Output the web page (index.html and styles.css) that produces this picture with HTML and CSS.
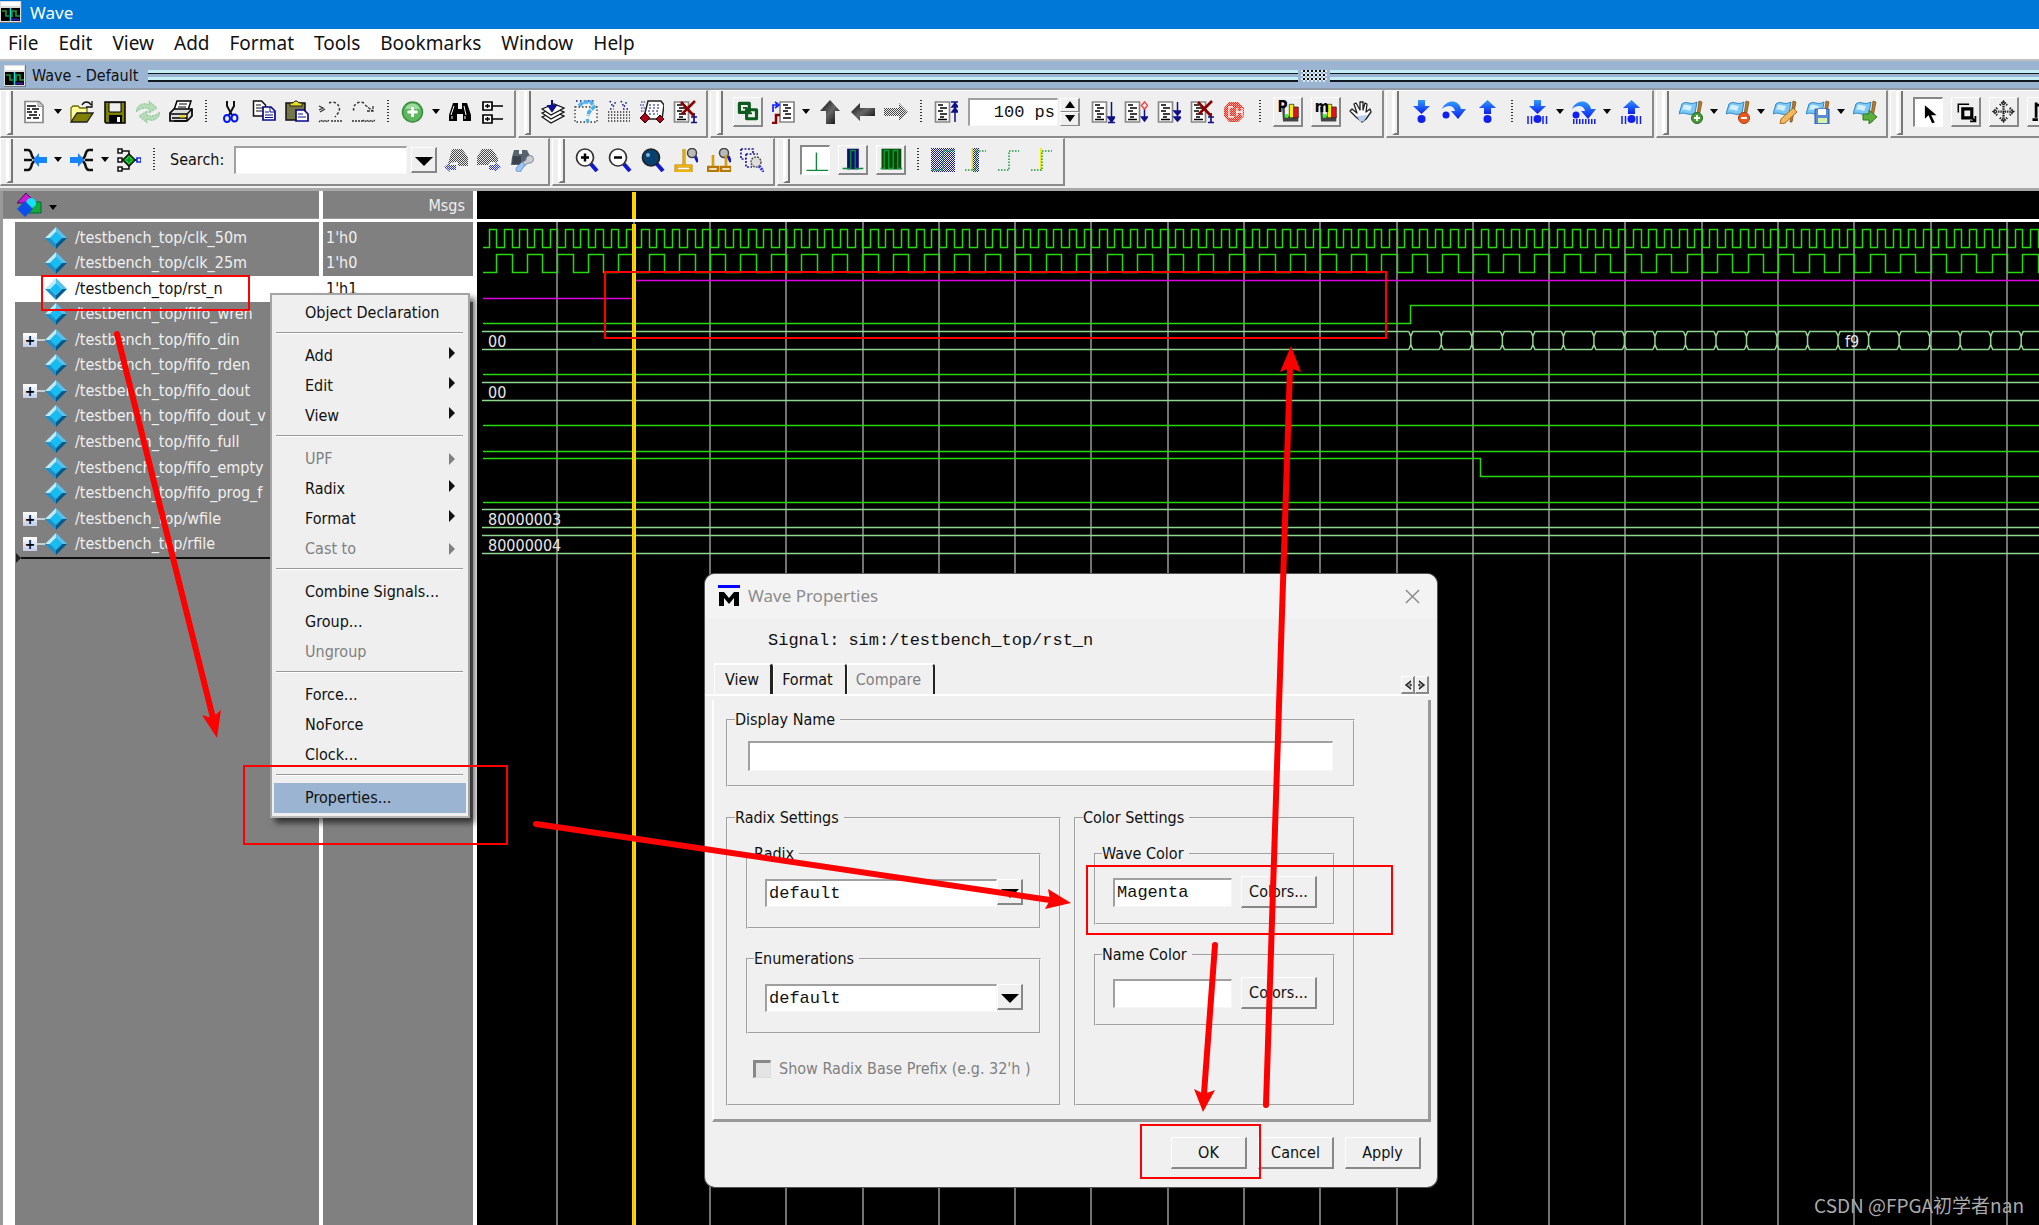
FILE: index.html
```html
<!DOCTYPE html>
<html lang="en">
<head>
<meta charset="utf-8">
<title>Wave</title>
<link rel="stylesheet" href="styles.css">
</head>
<body>
<svg class="sprite" aria-hidden="true">
  <defs>
    <pattern id="p-gray" width="2" height="2" patternUnits="userSpaceOnUse"><path d="M0 0h1v1H0zM1 1h1v1H1z" fill="#444"/></pattern>
    <pattern id="p-blue" width="2" height="2" patternUnits="userSpaceOnUse"><path d="M0 0h1v1H0zM1 1h1v1H1z" fill="#2a2fff"/></pattern>
    <pattern id="p-navy" width="2" height="2" patternUnits="userSpaceOnUse"><path d="M0 0h1v1H0zM1 1h1v1H1z" fill="#1c1c8c"/></pattern>
    <pattern id="p-red" width="2" height="2" patternUnits="userSpaceOnUse"><path d="M0 0h1v1H0zM1 1h1v1H1z" fill="#ff2a18"/></pattern>
    <linearGradient id="g-arrow" x1="0" y1="0" x2="1" y2="1"><stop offset="0" stop-color="#0a0a0a"/><stop offset=".5" stop-color="#666"/><stop offset="1" stop-color="#000"/></linearGradient>
    <linearGradient id="g-blue" x1="0" y1="0" x2="0" y2="1"><stop offset="0" stop-color="#2f9bff"/><stop offset="1" stop-color="#0a1ef0"/></linearGradient>
  </defs>
  <symbol id="i-app" viewBox="0 0 22 22"><path d="M0 0h22v22H0z" fill="#777"/><path d="M0 0h21v21H0z" fill="#ddd"/><path d="M1 1h19v4H1z" fill="#fff"/><path d="M1 7h19v13H1z" fill="#000"/><path d="M2 10h4v5h3M12 16v-6h4v5h4" fill="none" stroke="#1a9a3a" stroke-width="1.6"/><path d="M10.500 7v13" stroke="#18d8d8" stroke-width="1.600"/><path d="M12 18.500h7" stroke="#3a18a0" stroke-width="2"/></symbol>
  <symbol id="i-new" viewBox="0 0 24 24"><path d="M2 1.500h14l4 4v17H2z" fill="#fff" stroke="#888" stroke-width="1.700"/><path d="M15 1.500v5h5" fill="#ccc" stroke="#999"/><path d="M4 6h9M4 9h3m2 0h7M4 12h5m2 0h3M6 15h8m2 0h1M4 18h4m2 0h6" stroke="#000" stroke-width="1.300"/></symbol>
  <symbol id="i-open" viewBox="0 0 24 24"><path d="M1 21V8l2-2h5l2 2h7v5" fill="#ffff9c" stroke="#6b6b00" stroke-width="1.300"/><path d="M1 22l6-9h16l-6 9z" fill="#808000" stroke="#222" stroke-width="1.300"/><path d="M12 5c2-4 7-4 9 0M22 1v6h-6" fill="none" stroke="#111" stroke-width="1.300"/></symbol>
  <symbol id="i-save" viewBox="0 0 24 24"><path d="M2 2h20v21H3l-1-1z" fill="#808000" stroke="#000" stroke-width="1.500"/><path d="M6 2.700h12V12H6z" fill="#eee" stroke="#000"/><path d="M6 15h13v8H6z" fill="#000"/><path d="M14 17h3v5h-3z" fill="#fff"/></symbol>
  <symbol id="i-refresh" viewBox="0 0 24 24"><path d="M0 12c1-8 8-10 13-7V1l8 7-8 5V9c-4-2-8-1-13 3zM24 12c-1 8-8 10-13 7v4l-8-7 8-5v4c4 2 8 1 13-3z" fill="#b4dcb8" stroke="#8cc494" stroke-width="1" stroke-dasharray="2 1"/></symbol>
  <symbol id="i-print" viewBox="0 0 24 24"><path d="M8 1h14l-3 9H5z" fill="#fff" stroke="#000" stroke-width="1.500"/><path d="M10 4h8M9 7h8" stroke="#000"/><path d="M1 13l4-4h18v7l-5 5H1z" fill="#ddd" stroke="#000" stroke-width="1.700"/><path d="M2 14h16l5-5M3 18h15M18 14v7M5 21h12" fill="none" stroke="#000" stroke-width="1.300"/><path d="M11 15.500h5v2h-5z" fill="#e8d800"/></symbol>
  <symbol id="i-cut" viewBox="0 0 24 24"><path d="M8 1v5l5 9M15 1v5l-5 9" fill="none" stroke="#111" stroke-width="2"/><ellipse cx="8" cy="18.500" rx="3" ry="3.500" fill="none" stroke="#0014f0" stroke-width="2"/><ellipse cx="15.500" cy="18" rx="3" ry="3.500" fill="none" stroke="#0014f0" stroke-width="2"/></symbol>
  <symbol id="i-copy" viewBox="0 0 24 24"><path d="M1.500 1h8l4 4v11h-12z" fill="#fff" stroke="#111" stroke-width="1.500"/><path d="M4 5h5M4 8h7M4 11h7" stroke="#111"/><path d="M11 7h8l4 4v9H11z" fill="#fff" stroke="#0a0a8c" stroke-width="1.700"/><path d="M18 7v5h5M13 12h4M13 15h8M13 17.500h8" fill="none" stroke="#0a0a8c"/></symbol>
  <symbol id="i-paste" viewBox="0 0 24 24"><path d="M1 3h19v17H1z" fill="#75754a" stroke="#111" stroke-width="1.500"/><path d="M5 6V3h3l2-2h2l2 2h3v3z" fill="#e8e020" stroke="#222"/><path d="M11 10h8l4 4v7H11z" fill="#fff" stroke="#0a0a8c" stroke-width="1.700"/><path d="M13 14h5M13 17h8" stroke="#0a0a8c"/></symbol>
  <symbol id="i-undo" viewBox="0 0 24 24"><path d="M11 3c7-3 12 3 10 9l-4 5" fill="none" stroke="#333" stroke-width="1.500" stroke-dasharray="2.500 2"/><path d="M1 6l4 2-4 2m1 2l5-3" fill="none" stroke="#333" stroke-width="1.300"/><path d="M1 22l2-2 2 2 2-2 2 2 2-2M13 21h11" fill="none" stroke="#333" stroke-width="1.300" stroke-dasharray="2 1"/></symbol>
  <symbol id="i-redo" viewBox="0 0 24 24"><path d="M13 3C6 0 1 6 3 12" fill="none" stroke="#333" stroke-width="1.500" stroke-dasharray="2.500 2"/><path d="M14 5l8 6m0-5v5h-6" fill="none" stroke="#333" stroke-width="1.300" stroke-dasharray="3 1"/><path d="M1 21h11M12 20l2 2 2-2 2 2 2-2 2 2 2-2" fill="none" stroke="#333" stroke-width="1.300" stroke-dasharray="2 1"/></symbol>
  <symbol id="i-add" viewBox="0 0 24 24"><circle cx="11.500" cy="12" r="10" fill="#5cb85c" stroke="#3d8b45" stroke-width="1.500"/><path d="M4 9a8 8 0 0 1 15 0z" fill="#9bdb9b"/><path d="M11.500 7v10M6.500 12h10" stroke="#fff" stroke-width="3"/></symbol>
  <symbol id="i-find" viewBox="0 0 24 24"><path d="M5 3h5v6h4V3h5l4 12v6h-8v-7H9v7H1v-6z" fill="#000"/><path d="M6 6l-3 9M16 6l2 9M4 19v-3M17 19v-3" stroke="#fff" stroke-width="1"/></symbol>
  <symbol id="i-tree" viewBox="0 0 24 24"><path d="M2 2h9v8H2zM2 15h9v8H2z" fill="#fff" stroke="#000" stroke-width="1.700"/><path d="M4 6h5M6.500 4v4M4 19h5M6.500 17v4M11 6h11M11 19h11" stroke="#000" stroke-width="1.500"/></symbol>
  <symbol id="i-stack" viewBox="0 0 24 24"><g fill="#fff" stroke="#111" stroke-width="1.300"><path d="M1 17l12-5 10 4-13 7z"/><path d="M1 13l12-5 10 4-13 7z"/><path d="M1 9l12-5 10 4-13 7z"/></g><path d="M11 0v8M7.500 6l3.500 5 3.500-5z" stroke="#10108c" stroke-width="2" fill="#10108c"/></symbol>
  <symbol id="i-query" viewBox="0 0 24 24"><path d="M1 7h22v15H1z" fill="#f6f6f6" stroke="#333" stroke-width="1.300" stroke-dasharray="1.500 2"/><path d="M2 1h20" stroke="#10108c" stroke-width="1.300" stroke-dasharray="1.500 2.500"/><path d="M5 6l4-4h8l3 5-5 5-1 4M13 19l1 3" fill="none" stroke="#4db0f0" stroke-width="3.500" stroke-dasharray="5 1"/></symbol>
  <symbol id="i-grid" viewBox="0 0 24 24"><path d="M3 1l3 6 3-6M14 1l3 6 3-6M3 9h4m9 0h5" fill="none" stroke="#10108c" stroke-width="1.500" stroke-dasharray="1.500 2"/><path d="M1 12h22M1 15h22M1 18h22M1 21h22" stroke="#333" stroke-width="1.300" stroke-dasharray="1.300 1.700"/></symbol>
  <symbol id="i-run" viewBox="0 0 24 24"><path d="M8 1h13l3 4-2 14H8L5 13z" fill="#fff" stroke="#222" stroke-width="1.500"/><path d="M9 5h11M9 8h11M8 11h12M9 14h9" stroke="#10108c" stroke-width="1" stroke-dasharray="2 2"/><path d="M1 2h4M0 5h5M1 8h4M1 11h3" stroke="#10108c" stroke-dasharray="1.500 1"/><path d="M5 13l5 5-5 5-5-5zM20 15l4 4-4 4-4-4z" fill="#b00020" stroke="#200"/></symbol>
  <symbol id="i-page" viewBox="0 0 24 24"><path d="M1.500 2h14v20h-14z" fill="#fff" stroke="#888" stroke-width="1.700"/><path d="M4 5h5M6 8h7M4 11h5M6 14h7M6 17h4M4 19.500h9" stroke="#000" stroke-width="1.700"/></symbol>
  <symbol id="i-page-x" viewBox="0 0 24 24"><use href="#i-page" width="24" height="24"/><path d="M21 13v9M18 17h6M18 22.500h6" stroke="#10108c" stroke-width="1.700"/><path d="M8 2l13 14M22 1L9 14" stroke="#8b0000" stroke-width="2.700"/></symbol>
  <symbol id="i-page-up" viewBox="0 0 24 24"><use href="#i-page" width="24" height="24"/><path d="M17 2h7M21 2v20M21 3l-3 4h6zM21 8l-3 4h6z" stroke="#10108c" stroke-width="1.500" fill="#10108c"/></symbol>
  <symbol id="i-page-1" viewBox="0 0 24 24"><use href="#i-page" width="24" height="24"/><path d="M20.500 2v19M17 17l3.500 5 3.500-5zM17 22.500h7" stroke="#10108c" stroke-width="1.500" fill="#10108c"/></symbol>
  <symbol id="i-page-2" viewBox="0 0 24 24"><use href="#i-page" width="24" height="24"/><path d="M20.500 9v12M17.500 17l3 4 3-4z" stroke="#10108c" stroke-width="1.500" fill="#10108c"/><path d="M20.500 2l3 3.500-3 3.500-3-3.500z" fill="#fff" stroke="#ff4040" stroke-width="1.500"/></symbol>
  <symbol id="i-page-3" viewBox="0 0 24 24"><use href="#i-page" width="24" height="24"/><path d="M20.500 2v19M17 11l3.500 4 3.500-4zM17 17l3.500 4 3.500-4z" stroke="#10108c" stroke-width="1.500" fill="#10108c"/></symbol>
  <symbol id="i-link" viewBox="0 0 30 30"><path d="M6 6h11v10H6zM14 13h11v10H14z" fill="none" stroke="#0b5a1e" stroke-width="3.500" stroke-linejoin="round"/><path d="M10 11h4v6h6" fill="none" stroke="#0b5a1e" stroke-width="2"/></symbol>
  <symbol id="i-edge" viewBox="0 0 24 24"><path d="M9 2h14v20H9z" fill="#fff" stroke="#888" stroke-width="1.700"/><path d="M12 5h5M14 8h6M12 11h5M14 14h6M12 18h8" stroke="#000" stroke-width="1.700"/><path d="M2 12V5h4M4 2l4 3-4 3" fill="none" stroke="#1020ff" stroke-width="1.700"/><path d="M1 23h4v-8h4" fill="none" stroke="#8b0000" stroke-width="2.500"/></symbol>
  <symbol id="i-up" viewBox="0 0 24 24"><path d="M12 0l10 11h-5v13H8V11H2z" fill="url(#g-arrow)"/></symbol>
  <symbol id="i-left" viewBox="0 0 24 24"><path d="M0 12L9 3v5h15v8H9v5z" fill="url(#g-arrow)"/></symbol>
  <symbol id="i-right" viewBox="0 0 24 24"><path d="M24 12l-9-9v5H0v8h15v5z" fill="url(#p-gray)"/></symbol>
  <symbol id="i-stop" viewBox="0 0 24 24"><path d="M6 2h9l6 6v8l-6 6H6l-5-6V8z" fill="url(#p-red)"/><path d="M6 2h9l6 6v8l-6 6H6l-5-6V8z" fill="#ff2a18" opacity=".35"/><path d="M10 7H6v10h5M13 12h6M14 8v8M19 8v8" fill="none" stroke="#fff" stroke-width="1.300"/></symbol>
  <symbol id="i-bars" viewBox="0 0 30 30"><path d="M9 10h3v10h15v6H10z" fill="#444"/><path d="M12 18h4v4h-4z" fill="#2bff2b"/><path d="M17 7h5v15h-5z" fill="#f4f000" stroke="#222" stroke-width=".8"/><path d="M22 10h5v12h-5z" fill="#f01010" stroke="#222" stroke-width=".8"/></symbol>
  <symbol id="i-hand" viewBox="0 0 24 24"><path d="M7 17l-6-6 2-2 5 4-3-9 2-1 4 7V2h3v8l2-7 2 1-1 8 4-3 1 3-5 7-4 3z" fill="#fff" stroke="#222" stroke-width="1.300" stroke-linejoin="round"/><path d="M8 16l10-1-3 6-4 1z" fill="#b9d0f0"/></symbol>
  <symbol id="i-into" viewBox="0 0 24 24"><path d="M9 0h7v6h5l-8.500 8L4 6h5z" fill="url(#g-blue)"/><circle cx="12.500" cy="19" r="4" fill="#1020f0"/></symbol>
  <symbol id="i-over" viewBox="0 0 24 24"><path d="M0 9C4-1 17-1 19 9h5l-8 10-7-8h4C12 6 6 4 0 9z" fill="url(#g-blue)"/><circle cx="4" cy="15" r="3.500" fill="#1020f0"/></symbol>
  <symbol id="i-out" viewBox="0 0 24 24"><path d="M9 14h7V8h5l-8.500-8L4 8h5z" fill="url(#g-blue)"/><circle cx="12.500" cy="19" r="4" fill="#1020f0"/></symbol>
  <symbol id="i-ticks" viewBox="0 0 24 24"><path d="M3 16v8M6.500 16v8M18 16v8M21.500 16v8" stroke="#1020f0" stroke-width="1.500"/></symbol>
  <symbol id="i-into2" viewBox="0 0 24 24"><use href="#i-into" width="24" height="24"/><use href="#i-ticks" width="24" height="24"/></symbol>
  <symbol id="i-out2" viewBox="0 0 24 24"><use href="#i-out" width="24" height="24"/><use href="#i-ticks" width="24" height="24"/></symbol>
  <symbol id="i-over2" viewBox="0 0 24 24"><use href="#i-over" width="24" height="24"/><path d="M1 21.500h23" stroke="#1020f0" stroke-width="5" stroke-dasharray="1.500 1.500"/></symbol>
  <symbol id="i-flag" viewBox="0 0 24 24"><path d="M20 1l3 1-4 20h-2z" fill="#b47a30" stroke="#7a4a10" stroke-width=".7"/><path d="M3 4c5-4 8 2 15-2l-2 11C10 17 6 11 0 14z" fill="#7cc8f4" stroke="#2a86c8"/><path d="M5 5c3-1 5 1 8 1l-2 5C8 10 5 9 3 10z" fill="#d4f0ff"/></symbol>
  <symbol id="i-flag-add" viewBox="0 0 24 24"><use href="#i-flag" width="24" height="24"/><circle cx="18" cy="18" r="5.500" fill="#4a9a3a" stroke="#2a6a20"/><path d="M18 15v6M15 18h6" stroke="#fff" stroke-width="1.800"/></symbol>
  <symbol id="i-flag-del" viewBox="0 0 24 24"><use href="#i-flag" width="24" height="24"/><circle cx="18" cy="18" r="5.500" fill="#e85a20" stroke="#b03a08"/><path d="M15 18h6" stroke="#fff" stroke-width="2"/></symbol>
  <symbol id="i-flag-edit" viewBox="0 0 24 24"><use href="#i-flag" width="24" height="24"/><path d="M20 8l4 4-12 11-5 1 1-5z" fill="#f4b860" stroke="#a86a18"/></symbol>
  <symbol id="i-flag-save" viewBox="0 0 24 24"><use href="#i-flag" width="24" height="24"/><path d="M9 9h14v15H9z" fill="#5a8cd8" stroke="#2a5aa8"/><path d="M12 9h8v6h-8z" fill="#fff"/><path d="M12 18h9v5h-9z" fill="#d8f0a8"/></symbol>
  <symbol id="i-flag-go" viewBox="0 0 24 24"><use href="#i-flag" width="24" height="24"/><path d="M10 14h6v-4l8 7-8 7v-4h-6z" fill="#5cb040" stroke="#2f7a1c"/></symbol>
  <symbol id="i-pointer" viewBox="0 0 30 30"><path d="M11 7v15l4-4 4 9 3-1-4-8h6z" fill="#000"/></symbol>
  <symbol id="i-zoombox" viewBox="0 0 30 30"><path d="M7 16V7h12" fill="none" stroke="#000" stroke-width="1.700"/><path d="M12 12h10v10H12z" fill="none" stroke="#000" stroke-width="3.500"/><path d="M20 20l6 6m0-6v6h-6" fill="none" stroke="#000" stroke-width="2"/></symbol>
  <symbol id="i-pan" viewBox="0 0 30 30"><path d="M15 4v22M4 15h22M11 8l4-4 4 4M11 22l4 4 4-4M8 11l-4 4 4 4M22 11l4 4-4 4" fill="none" stroke="#222" stroke-width="2.500" stroke-dasharray="1.500 1"/></symbol>
  <symbol id="i-edit" viewBox="0 0 30 30"><path d="M9 5v17M5 24h6M9 8h12" fill="none" stroke="#000" stroke-width="3"/></symbol>
  <symbol id="i-merge" viewBox="0 0 24 24"><path d="M1 2h4c3 0 3 3 4 6l2 3M1 12h8M1 22h4c3 0 3-3 4-6l2-3" fill="none" stroke="#111" stroke-width="2.500"/><path d="M10 12l6-7v4h8v6h-8v4z" fill="#1684ff"/></symbol>
  <symbol id="i-split" viewBox="0 0 24 24"><path d="M23 2h-4c-3 0-3 3-4 6l-2 3M23 12h-8M23 22h-4c-3 0-3-3-4-6l-2-3" fill="none" stroke="#111" stroke-width="2.500"/><path d="M14 12L8 5v4H0v6h8v4z" fill="#1684ff"/></symbol>
  <symbol id="i-expand" viewBox="0 0 24 24"><path d="M4 3h8v18H4M4 12h16" fill="none" stroke="#111" stroke-width="1.500"/><path d="M1 1h4v4H1zM1 10h4v4H1zM1 19h4v4H1z" fill="#fff" stroke="#111" stroke-width="1.500"/><path d="M12 6l6 6-6 6-6-6z" fill="#18d828" stroke="#111" stroke-width="1.700"/><path d="M12 9v6M9 12h6" stroke="#063"/><path d="M20 10h4v4h-4z" fill="#fff" stroke="#1030ff" stroke-width="1.700"/></symbol>
  <symbol id="i-fprev" viewBox="0 0 24 24"><path d="M8 1h10l6 8v9H14v-4H10l-6 2z" fill="url(#p-gray)"/><path d="M0 19l6-5v3h6v5H6v2z" fill="url(#p-blue)"/></symbol>
  <symbol id="i-fnext" viewBox="0 0 24 24"><path d="M5 1h10l6 9v4h-8l-2 3H0V9z" fill="url(#p-gray)"/><path d="M24 19l-6-5v3h-6v5h6v2z" fill="url(#p-blue)"/></symbol>
  <symbol id="i-fopt" viewBox="0 0 24 24"><path d="M4 2h5v4h3V2h5l4 8-6 7H1l1-8z" fill="#56646f"/><path d="M3 8h8v8H2z" fill="#39444e"/><path d="M22 8c3 3 1 8-4 7l-5 4-3-3 6-4c0-4 3-5 6-4z" fill="#c8ced4" stroke="#808890"/><path d="M12 14l3 3-5 7c-4 1-5-3-3-5z" fill="#9cc4f4" stroke="#6a96d0"/></symbol>
  <symbol id="i-zin" viewBox="0 0 24 24"><path d="M15 15l7 8" stroke="#1018d0" stroke-width="4"/><circle cx="10" cy="9.500" r="8.500" fill="#fff" stroke="#333" stroke-width="1.700"/><path d="M10 5.500v8M6 9.500h8" stroke="#000" stroke-width="2.500"/></symbol>
  <symbol id="i-zout" viewBox="0 0 24 24"><path d="M15 15l7 8" stroke="#1018d0" stroke-width="4"/><circle cx="10" cy="9.500" r="8.500" fill="#fff" stroke="#333" stroke-width="1.700"/><path d="M6 9.500h8" stroke="#000" stroke-width="2.500"/></symbol>
  <symbol id="i-zfull" viewBox="0 0 24 24"><path d="M15 15l7 8" stroke="#1018d0" stroke-width="4"/><circle cx="10" cy="9.500" r="8.500" fill="#08406e" stroke="#222" stroke-width="1.700"/><circle cx="7" cy="7" r="2" fill="#7cb4e0"/></symbol>
  <symbol id="i-zcur" viewBox="0 0 24 24"><path d="M10 1v16M2 18h15v5H2z" fill="#fff" stroke="#b87800" stroke-width="3"/><path d="M10 1v16M2 18h15v5H2z" fill="none" stroke="#ffc800" stroke-width="1.300"/><path d="M21 8l3 6" stroke="#1018d0" stroke-width="3"/><circle cx="18" cy="5" r="4.500" fill="#bbb" stroke="#444" stroke-width="1.500"/></symbol>
  <symbol id="i-zcur2" viewBox="0 0 24 24"><path d="M21 8l3 6" stroke="#1018d0" stroke-width="3"/><circle cx="17" cy="5" r="4.500" fill="#bbb" stroke="#444" stroke-width="1.500"/><path d="M6 7v11M1 19h10v4H1zM19 7v11M14 19h10v4H14z" fill="#fff" stroke="#b87800" stroke-width="2.500"/><path d="M6 7v11M19 7v11" stroke="#ffc800"/></symbol>
  <symbol id="i-zarea" viewBox="0 0 24 24"><path d="M1 1h12v5M1 1v10h5M6 6h12M6 6v13h6" fill="none" stroke="#2020a0" stroke-width="1.700" stroke-dasharray="2 1.500"/><path d="M19 18l5 6" stroke="#2a2fff" stroke-width="3" stroke-dasharray="2 1"/><circle cx="16" cy="14" r="5" fill="#ddd" stroke="#555" stroke-width="1.500" stroke-dasharray="2 1"/></symbol>
  <symbol id="i-w1" viewBox="0 0 30 30"><path d="M16 6v20M5 26h24" stroke="#0a8a3a" stroke-width="1.500"/></symbol>
  <symbol id="i-w2" viewBox="0 0 30 30"><path d="M9 3h13v23H9z" fill="#101070"/><path d="M4 25h9V5h5v20h9" fill="none" stroke="#0a8a3a" stroke-width="1.500"/></symbol>
  <symbol id="i-w3" viewBox="0 0 30 30"><path d="M5 3h22v23H5z" fill="#064a06"/><path d="M4 25h4V5h5v20h5V5h5v20h5" fill="none" stroke="#0aa03a" stroke-width="1.500"/></symbol>
  <symbol id="i-w4" viewBox="0 0 24 24"><path d="M0 0h24v24H0z" fill="url(#p-navy)"/><path d="M1 22h11V3h10" fill="none" stroke="#1aa05a" stroke-width="1.300" stroke-dasharray="2 1"/></symbol>
  <symbol id="i-w5" viewBox="0 0 24 24"><path d="M8 0h7v24H8z" fill="url(#p-navy)"/><path d="M8 0v23" stroke="#f4f000" stroke-width="1.500"/><path d="M1 22h11V3h10" fill="none" stroke="#1a9a3a" stroke-width="1.300" stroke-dasharray="1.500 1.500"/></symbol>
  <symbol id="i-w6" viewBox="0 0 24 24"><path d="M1 22h11V3h10" fill="none" stroke="#1a9a3a" stroke-width="1.500" stroke-dasharray="1.500 1.500"/></symbol>
  <symbol id="i-w7" viewBox="0 0 24 24"><path d="M11 0v23" stroke="#f4f000" stroke-width="2"/><path d="M1 22h11V3h10" fill="none" stroke="#1a9a3a" stroke-width="1.500" stroke-dasharray="1.500 1.500"/></symbol>
  <symbol id="i-shapes" viewBox="0 0 26 24"><path d="M0 10L9 0l6 6-6 4z" fill="#d018d8" stroke="#401050"/><path d="M12 9h12v11H12z" fill="#18a838" stroke="#064"/><circle cx="14" cy="10" r="5" fill="#18e0f8"/><path d="M8 8l8 8-8 8-8-8z" fill="#0a50e8"/></symbol>
  <symbol id="i-gem" viewBox="0 0 24 24"><path d="M12 1L1 12h5l6-6z" fill="#b8ecfc"/><path d="M12 1l11 11h-5l-6-6z" fill="#58c0ec"/><path d="M1 12l11 11v-5l-6-6z" fill="#1a90cc"/><path d="M23 12L12 23v-5l6-6z" fill="#055a8c"/><path d="M12 6l6 6-6 6-6-6z" fill="#14bdf4"/></symbol>
  <symbol id="i-m" viewBox="0 0 22 22"><path d="M0 0h22v3H0z" fill="#0000ff"/><path d="M1 7h5l5 6 5-6h5v14h-5v-8l-5 6-5-6v8H1z" fill="#000"/></symbol>
</svg>

<header class="titlebar"><svg class="app-icon"><use href="#i-app"/></svg><h1>Wave</h1></header>
<nav class="menubar">
  <button>File</button><button>Edit</button><button>View</button><button>Add</button><button>Format</button><button>Tools</button><button>Bookmarks</button><button>Window</button><button>Help</button>
</nav>
<div class="dockbar"><svg class="app-icon"><use href="#i-app"/></svg><h2>Wave - Default</h2><span class="rail rail-left"></span><span class="grip"></span><span class="rail rail-right"></span></div>

<div class="toolbars">
  <div class="toolrow">
    <div class="group">
      <button class="tool" aria-label="New"><svg><use href="#i-new"/></svg></button><i class="caret"></i>
      <button class="tool" aria-label="Open"><svg><use href="#i-open"/></svg></button>
      <button class="tool" aria-label="Save"><svg><use href="#i-save"/></svg></button>
      <button class="tool" aria-label="Reload"><svg><use href="#i-refresh"/></svg></button>
      <button class="tool" aria-label="Print"><svg><use href="#i-print"/></svg></button><i class="sep"></i>
      <button class="tool" aria-label="Cut"><svg><use href="#i-cut"/></svg></button>
      <button class="tool" aria-label="Copy"><svg><use href="#i-copy"/></svg></button>
      <button class="tool" aria-label="Paste"><svg><use href="#i-paste"/></svg></button>
      <button class="tool" aria-label="Undo"><svg><use href="#i-undo"/></svg></button>
      <button class="tool" aria-label="Redo"><svg><use href="#i-redo"/></svg></button><i class="sep"></i>
      <button class="tool" aria-label="Add"><svg><use href="#i-add"/></svg></button><i class="caret"></i>
      <button class="tool" aria-label="Find"><svg><use href="#i-find"/></svg></button>
      <button class="tool" aria-label="Collapse all"><svg><use href="#i-tree"/></svg></button>
    </div>
    <div class="group">
      <button class="tool" aria-label="Compile"><svg><use href="#i-stack"/></svg></button>
      <button class="tool" aria-label="Compile out of date"><svg><use href="#i-query"/></svg></button>
      <button class="tool" aria-label="Compile all"><svg><use href="#i-grid"/></svg></button>
      <button class="tool" aria-label="Simulate"><svg><use href="#i-run"/></svg></button>
      <button class="tool" aria-label="Break"><svg><use href="#i-page-x"/></svg></button>
    </div>
    <div class="group">
      <button class="key" aria-label="Link"><svg><use href="#i-link"/></svg></button>
      <button class="tool" aria-label="Edge"><svg><use href="#i-edge"/></svg></button><i class="caret"></i>
      <button class="tool" aria-label="Environment up"><svg><use href="#i-up"/></svg></button>
      <button class="tool" aria-label="Environment back"><svg><use href="#i-left"/></svg></button>
      <button class="tool" aria-label="Environment forward"><svg><use href="#i-right"/></svg></button><i class="sep"></i>
      <button class="tool" aria-label="Restart"><svg><use href="#i-page-up"/></svg></button>
      <input class="field run-length" aria-label="Run length" value="100 ps">
      <span class="spinner"><button aria-label="Increase"><i class="tri-up"></i></button><button aria-label="Decrease"><i class="tri-down"></i></button></span>
      <button class="tool" aria-label="Run"><svg><use href="#i-page-1"/></svg></button>
      <button class="tool" aria-label="Continue run"><svg><use href="#i-page-2"/></svg></button>
      <button class="tool" aria-label="Run all"><svg><use href="#i-page-3"/></svg></button>
      <button class="tool" aria-label="Break run"><svg><use href="#i-page-x"/></svg></button>
      <button class="tool" aria-label="Stop"><svg><use href="#i-stop"/></svg></button><i class="sep"></i>
      <button class="key" aria-label="Performance"><svg viewBox="0 0 30 30"><use href="#i-bars" width="30" height="30"/><text x="4" y="15" class="glyph">P</text></svg></button>
      <button class="key" aria-label="Memory"><svg viewBox="0 0 30 30"><use href="#i-bars" width="30" height="30"/><text x="3" y="15" class="glyph">m</text></svg></button>
      <button class="tool" aria-label="Pan hand"><svg><use href="#i-hand"/></svg></button>
    </div>
    <div class="group">
      <button class="tool" aria-label="Step into"><svg><use href="#i-into"/></svg></button>
      <button class="tool" aria-label="Step over"><svg><use href="#i-over"/></svg></button>
      <button class="tool" aria-label="Step out"><svg><use href="#i-out"/></svg></button><i class="sep"></i>
      <button class="tool" aria-label="Step into current"><svg><use href="#i-into2"/></svg></button><i class="caret"></i>
      <button class="tool" aria-label="Step over current"><svg><use href="#i-over2"/></svg></button><i class="caret"></i>
      <button class="tool" aria-label="Step out current"><svg><use href="#i-out2"/></svg></button>
    </div>
    <div class="group">
      <button class="tool" aria-label="Add bookmark"><svg><use href="#i-flag-add"/></svg></button><i class="caret"></i>
      <button class="tool" aria-label="Delete bookmark"><svg><use href="#i-flag-del"/></svg></button><i class="caret"></i>
      <button class="tool" aria-label="Edit bookmark"><svg><use href="#i-flag-edit"/></svg></button>
      <button class="tool" aria-label="Save bookmark"><svg><use href="#i-flag-save"/></svg></button><i class="caret"></i>
      <button class="tool" aria-label="Go to bookmark"><svg><use href="#i-flag-go"/></svg></button>
    </div>
    <div class="group">
      <button class="key pressed" aria-label="Select mode"><svg><use href="#i-pointer"/></svg></button>
      <button class="key" aria-label="Zoom mode"><svg><use href="#i-zoombox"/></svg></button>
      <button class="key" aria-label="Pan mode"><svg><use href="#i-pan"/></svg></button>
      <button class="key" aria-label="Edit mode"><svg><use href="#i-edit"/></svg></button>
    </div>
  </div>
  <div class="toolrow">
    <div class="group find-group">
      <button class="tool" aria-label="Merge"><svg><use href="#i-merge"/></svg></button><i class="caret"></i>
      <button class="tool" aria-label="Split"><svg><use href="#i-split"/></svg></button><i class="caret"></i>
      <button class="tool" aria-label="Expand net"><svg><use href="#i-expand"/></svg></button><i class="sep"></i>
      <label for="search">Search:</label>
      <input class="field search" id="search">
      <button class="drop search-drop" aria-label="Search history"><i class="tri-down"></i></button>
      <button class="tool" aria-label="Find previous"><svg><use href="#i-fprev"/></svg></button>
      <button class="tool" aria-label="Find next"><svg><use href="#i-fnext"/></svg></button>
      <button class="tool" aria-label="Search options"><svg><use href="#i-fopt"/></svg></button>
    </div>
    <div class="group">
      <button class="tool" aria-label="Zoom in"><svg><use href="#i-zin"/></svg></button>
      <button class="tool" aria-label="Zoom out"><svg><use href="#i-zout"/></svg></button>
      <button class="tool" aria-label="Zoom full"><svg><use href="#i-zfull"/></svg></button>
      <button class="tool" aria-label="Zoom to cursor"><svg><use href="#i-zcur"/></svg></button>
      <button class="tool" aria-label="Zoom between cursors"><svg><use href="#i-zcur2"/></svg></button>
      <button class="tool" aria-label="Zoom other window"><svg><use href="#i-zarea"/></svg></button>
    </div>
    <div class="group">
      <button class="key pressed" aria-label="Delta collapse"><svg><use href="#i-w1"/></svg></button>
      <button class="key" aria-label="Delta expand"><svg><use href="#i-w2"/></svg></button>
      <button class="key" aria-label="Event expand"><svg><use href="#i-w3"/></svg></button><i class="sep"></i>
      <button class="tool" aria-label="Expand all time"><svg><use href="#i-w4"/></svg></button>
      <button class="tool" aria-label="Expand at cursor"><svg><use href="#i-w5"/></svg></button>
      <button class="tool" aria-label="Collapse all time"><svg><use href="#i-w6"/></svg></button>
      <button class="tool" aria-label="Collapse at cursor"><svg><use href="#i-w7"/></svg></button>
    </div>
  </div>
</div>

<main class="workspace">
  <section class="names">
    <div class="pane-head names-head"><svg><use href="#i-shapes"/></svg><i class="caret"></i></div>
    <div class="names-body">
      <ul class="rows">
        <li><svg class="gem"><use href="#i-gem"/></svg>/testbench_top/clk_50m</li>
        <li><svg class="gem"><use href="#i-gem"/></svg>/testbench_top/clk_25m</li>
        <li class="selected"><svg class="gem"><use href="#i-gem"/></svg>/testbench_top/rst_n</li>
        <li><svg class="gem"><use href="#i-gem"/></svg>/testbench_top/fifo_wren</li>
        <li class="bus"><button class="plus" aria-label="Expand">+</button><svg class="gem"><use href="#i-gem"/></svg>/testbench_top/fifo_din</li>
        <li><svg class="gem"><use href="#i-gem"/></svg>/testbench_top/fifo_rden</li>
        <li class="bus"><button class="plus" aria-label="Expand">+</button><svg class="gem"><use href="#i-gem"/></svg>/testbench_top/fifo_dout</li>
        <li><svg class="gem"><use href="#i-gem"/></svg>/testbench_top/fifo_dout_v</li>
        <li><svg class="gem"><use href="#i-gem"/></svg>/testbench_top/fifo_full</li>
        <li><svg class="gem"><use href="#i-gem"/></svg>/testbench_top/fifo_empty</li>
        <li><svg class="gem"><use href="#i-gem"/></svg>/testbench_top/fifo_prog_f</li>
        <li class="bus"><button class="plus" aria-label="Expand">+</button><svg class="gem"><use href="#i-gem"/></svg>/testbench_top/wfile</li>
        <li class="bus"><button class="plus" aria-label="Expand">+</button><svg class="gem"><use href="#i-gem"/></svg>/testbench_top/rfile</li>
      </ul>
      <div class="endmark"></div>
    </div>
  </section>
  <section class="values">
    <div class="pane-head values-head">Msgs</div>
    <ul class="rows">
      <li>1'h0</li><li>1'h0</li><li class="selected">1'h1</li><li></li><li></li><li></li><li></li><li></li><li></li><li></li><li></li><li></li><li></li>
    </ul>
  </section>
  <section class="waves">
    <div class="timeline"></div>
    <svg class="traces" id="traces"></svg>
  </section>
  <p class="watermark">CSDN @FPGA初学者nan</p>
</main>

<div class="menu" role="menu">
  <button>Object Declaration</button><hr>
  <button class="sub">Add</button><button class="sub">Edit</button><button class="sub">View</button><hr>
  <button class="sub" disabled>UPF</button><button class="sub">Radix</button><button class="sub">Format</button><button class="sub" disabled>Cast to</button><hr>
  <button>Combine Signals...</button><button>Group...</button><button disabled>Ungroup</button><hr>
  <button>Force...</button><button>NoForce</button><button>Clock...</button><hr>
  <button class="active">Properties...</button>
</div>

<section class="dialog" role="dialog" aria-labelledby="dialog-title">
  <header><svg class="m-icon"><use href="#i-m"/></svg><h2 id="dialog-title">Wave Properties</h2>
    <button class="close" aria-label="Close"><svg viewBox="0 0 16 16"><path d="M1 1l14 14M15 1L1 15" stroke="#888" stroke-width="1.500" fill="none"/></svg></button></header>
  <p class="signal"><span>Signal:</span><span>sim:/testbench_top/rst_n</span></p>
  <div class="tabs">
    <button class="tab current">View</button><button class="tab">Format</button><button class="tab" disabled>Compare</button>
    <span class="scroll">
      <button aria-label="Previous tab"><svg viewBox="0 0 8 10"><path d="M7 0v10L1 5z" fill="#999"/><path d="M7 1L2 5l5 4M7 4v2" fill="none" stroke="#222" stroke-width="1.300"/></svg></button>
      <button aria-label="Next tab"><svg viewBox="0 0 8 10"><path d="M1 0v10l6-5z" fill="#999"/><path d="M1 1l5 4-5 4M1 4v2" fill="none" stroke="#222" stroke-width="1.300"/></svg></button>
    </span>
  </div>
  <div class="panel">
    <fieldset class="wide"><legend>Display Name</legend><input class="field" aria-label="Display Name"></fieldset>
    <fieldset class="block">
      <legend>Radix Settings</legend>
      <div class="stack">
        <fieldset class="combo-set"><legend>Radix</legend><div class="combo"><select class="field" aria-label="Radix"><option>default</option></select><button class="drop" aria-label="Open radix list"><i class="tri-down"></i></button></div></fieldset>
        <fieldset class="combo-set"><legend>Enumerations</legend><div class="combo"><select class="field" aria-label="Enumerations"><option>default</option></select><button class="drop" aria-label="Open enumerations list"><i class="tri-down"></i></button></div></fieldset>
        <label class="check"><input type="checkbox" disabled>Show Radix Base Prefix (e.g. 32'h )</label>
      </div>
    </fieldset>
    <fieldset class="block">
      <legend>Color Settings</legend>
      <div class="stack">
        <fieldset class="color-set"><legend>Wave Color</legend><div class="pick"><input class="field" aria-label="Wave Color" value="Magenta"><button class="push">Colors...</button></div></fieldset>
        <fieldset class="color-set"><legend>Name Color</legend><div class="pick"><input class="field" aria-label="Name Color"><button class="push">Colors...</button></div></fieldset>
      </div>
    </fieldset>
  </div>
  <footer><button class="push">OK</button><button class="push">Cancel</button><button class="push">Apply</button></footer>
</section>

<svg class="marks" aria-hidden="true">
  <g fill="none" stroke="#f00" stroke-width="2">
    <rect x="42" y="276" width="207" height="34"/>
    <rect x="244" y="766" width="263" height="78"/>
    <rect x="605" y="272" width="781" height="66"/>
    <rect x="1087" y="866" width="305" height="68"/>
    <rect x="1141" y="1125" width="119" height="53"/>
  </g>
  <g fill="none" stroke="#f00" stroke-width="6" stroke-linecap="round">
    <path d="M117 334L213 718M536 824L1050 900M1215 945L1204 1094M1266 1105L1290 368"/>
  </g>
  <g fill="#f00">
    <path d="M217 738L202 715L212 718L221 710Z"/>
    <path d="M1071 903L1045 909L1050 900L1048 889Z"/>
    <path d="M1203 1112L1194 1089L1204 1094L1215 1090Z"/>
    <path d="M1291 346L1301 372L1290 368L1280 372Z"/>
  </g>
</svg>
<script src="wave.js"></script>
</body>
</html>
```
FILE: styles.css
```css
:root {
  --face: #efefef;
  --pane: #808080;
  --ui: "DejaVu Sans Condensed", "DejaVu Sans", sans-serif;
  --mono: "Liberation Mono", "Courier New", monospace;
}
*, *::before, *::after { box-sizing: border-box; }
body {
  margin: 0;
  min-height: 100vh;
  display: flex;
  flex-direction: column;
  position: relative;
  overflow: hidden;
  background: var(--face);
  color: #111;
  font: 16px/20px var(--ui);
}
button, input, select { font: inherit; color: inherit; margin: 0; }
button { background: none; border: 0; padding: 0; }
h1, h2, p, ul { margin: 0; padding: 0; font-weight: normal; list-style: none; }
.sprite { position: absolute; width: 0; height: 0; }

.titlebar { height: 29px; display: flex; align-items: center; gap: 8px; background: #0078d7; color: #fff; overflow: hidden; }
.titlebar h1 { font: 17px/24px "Noto Sans", sans-serif; padding-bottom: 4px; }
.app-icon { width: 22px; height: 22px; flex: none; }
.titlebar .app-icon { margin-bottom: 6px; }
.menubar { height: 30px; display: flex; align-items: flex-start; gap: 20px; padding-left: 8px; background: #fff; font: 19px/28px "Noto Sans", sans-serif; }
.dockbar { height: 31px; display: flex; align-items: center; gap: 6px; padding: 2px 0 0 4px; border-top: 2px solid #c0c0c0; border-bottom: 2px solid #8f9aa6; background: #9ab4d1; }
.dockbar h2 { font-size: 16px; margin-right: 4px; }
.rail { height: 12px; background: linear-gradient(#c4eef4 0 3px, #101820 3px 4px, #9ab4d1 4px 7px, #c4eef4 7px 10px, #101820 10px 12px); }
.rail-left { flex: 1148 1 0; }
.rail-right { flex: 708 1 0; }
.grip { width: 26px; height: 12px; margin: 0 -3px; background: conic-gradient(#111 25%, #dfeaf4 0 50%, #9ab4d1 0 75%, #dfeaf4 0) 0 0 / 4px 4px; }

.toolrow { display: flex; height: 48px; gap: 2px; }
.group { flex: none; display: flex; align-items: center; height: 48px; padding: 0 1px 4px 14px; border: solid; border-width: 1px 2px 2px 1px; border-color: #fff #8a8a8a #8a8a8a #fff; }
.group::before { content: ""; width: 7px; height: 44px; margin: 3px 10px 0 -9px; border-right: 2px solid #777; border-bottom: 2px solid #777; border-left: 3px solid #fff; }
.find-group { padding-right: 6px; }
.tool { width: 24px; height: 24px; margin-right: 9px; flex: none; }
.group .tool:last-child { margin-right: 8px; }
.tool svg, .key svg { display: block; width: 100%; height: 100%; }
.caret { flex: none; width: 14px; }
.caret::after, .tri-down::after { content: ""; display: block; border: solid transparent; border-width: 5px 4px 0; border-top-color: #000; width: 0; }
.caret::after { margin-left: -2px; }
.sep { flex: none; width: 17px; height: 24px; background: repeating-linear-gradient(#333 0 1px, transparent 1px 3px) 3px 0 / 2px 100% no-repeat; }
.key { width: 30px; height: 30px; margin-right: 8px; flex: none; border: solid; border-width: 1px 2px 2px 1px; border-color: #fff #888 #888 #fff; }
.key.pressed { background: #fff; border-width: 2px 1px 1px 2px; border-color: #888 #fff #fff #888; }
.glyph { font: bold 17px var(--ui); fill: #000; }
.field { height: 28px; border: solid; border-width: 2px 1px 1px 2px; border-color: #a0a0a0 #f6f6f6 #f6f6f6 #a0a0a0; border-radius: 0; background: #fff; padding: 0 2px; font: 17px/24px var(--mono); outline: 0; min-width: 0; appearance: none; }
.run-length { width: 90px; text-align: right; margin: 0 2px 0 1px; }
.spinner { display: flex; flex-direction: column; width: 20px; height: 28px; margin-right: 11px; }
.spinner button { flex: 1; display: grid; place-items: center; border: solid; border-width: 1px 2px 1px 1px; border-color: #fff #888 #888 #fff; }
.tri-up::after { content: ""; display: block; width: 0; border: solid transparent; border-width: 0 5px 7px; border-bottom-color: #000; }
.spinner .tri-down::after { border-width: 7px 5px 0; }
.find-group label { margin-left: 3px; }
.search { width: 173px; margin: 0 4px 0 10px; }
.drop { width: 26px; height: 26px; flex: none; display: grid; place-items: center; border: solid; border-width: 1px 2px 2px 1px; border-color: #fff #888 #888 #fff; }
.drop .tri-down::after { border-width: 9px 9px 0; margin-top: 4px; }
.search-drop { margin-right: 7px; }

.workspace { flex: 1; display: flex; position: relative; margin-top: 2px; border-top: 3px solid #a8a8a8; background: #fff; min-height: 400px; }
.pane-head { height: 28px; background: var(--pane); border-bottom: 1px solid #999; color: #eee; display: flex; align-items: center; flex: none; }
.names { flex: none; width: 319px; display: flex; flex-direction: column; border-left: 3px solid #999; }
.names-head { padding-left: 14px; gap: 8px; }
.names-head svg { width: 26px; height: 24px; }
.names-head .caret { padding-top: 6px; }
.names-body { flex: 1; margin: 3px 0 0 12px; background: var(--pane); }
.rows { padding-top: 3px; height: 335px; display: flex; flex-direction: column; color: #f0f0f0; background: var(--pane); }
.rows li { flex: 1; display: flex; align-items: center; white-space: nowrap; overflow: hidden; }
.rows .selected { background: #fff; color: #111; }
.names .rows li { padding-left: 29px; }
.gem { width: 24px; height: 24px; margin-right: 7px; flex: none; }
.names .rows .bus { padding-left: 8px; }
.plus { width: 14px; height: 14px; margin-right: 7px; background: linear-gradient(#fff, #c4cce4); color: #000; font: bold 14px/14px var(--ui); text-align: center; flex: none; box-shadow: 8px 0 0 -6px #ccc, 10px 0 0 -6px #ccc, 12px 0 0 -6px #ccc, 14px 0 0 -6px #ccc; }
.endmark { height: 2px; background: #111; margin-left: 6px; }
.endmark::before { content: ""; display: block; width: 0; border: solid transparent; border-width: 5px 0 5px 5px; border-left-color: #222; margin-left: -5px; transform: translateY(-4px); }
.values { flex: none; width: 154px; margin-left: 4px; border-right: 4px solid #fff; display: flex; flex-direction: column; background: var(--pane); }
.values-head { justify-content: flex-end; padding: 3px 8px 0 0; }
.values .rows { border-top: 3px solid #fff; height: 338px; }
.values .rows li { padding-left: 3px; }
.waves { flex: 1; min-width: 0; display: flex; flex-direction: column; background: #000; }
.timeline { height: 28px; flex: none; background: linear-gradient(#ffd500, #ffd500) 155px 1px / 4px 100% no-repeat #000; }
.traces { flex: 1; width: 100%; border-top: 3px solid #fff; display: block; }
.grid { stroke: #727272; stroke-width: 2; }
.sig { stroke: #27d80c; stroke-width: 1.5px; fill: none; }
.sig.rst { stroke: #e000e0; }
.sig.vec { stroke: #8fd68f; }
.cursor { fill: #ffd500; }
.cursor-core { fill: #c9bd6a; }
.val { fill: #e8e8e8; font: 16px var(--ui); }
.watermark { position: absolute; right: 15px; bottom: 7px; color: #aaa; font: 19px/26px "Noto Sans CJK SC", sans-serif; }

.menu { position: absolute; left: 270px; top: 293px; width: 200px; padding: 3px 2px; border: 2px solid #a4a4a4; border-bottom-color: #b8b8b8; background: var(--face); box-shadow: 5px 5px 6px #0009; display: flex; flex-direction: column; }
.menu button { height: 30px; text-align: left; padding: 0 11px 0 31px; }
.menu button:disabled { color: #808080; }
.menu hr { width: auto; align-self: stretch; margin: 4px 3px 7px 2px; border: 0; border-top: 1px solid #999; border-bottom: 1px solid #fff; height: 2px; }
.menu .active { background: #9ab4d1; }
.menu .sub { display: flex; align-items: center; justify-content: space-between; }
.menu .sub::after { content: ""; border: solid transparent; border-width: 6px 0 6px 6px; border-left-color: currentColor; margin-bottom: 6px; }
.menu .sub:disabled::after { margin-bottom: 0; }

.dialog { position: absolute; left: 705px; top: 574px; width: 732px; border-radius: 10px; background: #f0f0f0; box-shadow: 0 0 0 1px #555; overflow: hidden; }
.dialog header { height: 44px; display: flex; align-items: center; padding: 0 17px 0 13px; background: #f3f3f3; }
.m-icon { width: 22px; height: 22px; margin-right: 8px; }
.dialog h2 { flex: 1; font: 17px/24px "Noto Sans", sans-serif; color: #8c8c8c; }
.close { width: 15px; height: 15px; }
.close svg { display: block; }
.signal { display: flex; gap: 9px; padding: 12px 0 0 63px; height: 45px; font: 17px/22px var(--mono); }
.tabs { display: flex; height: 33px; padding-left: 9px; align-items: stretch; border-bottom: 2px solid #fff; margin-right: 8px; }
.tab { padding: 0 12px 0 8px; border-right: 2px solid #222; border-top: 2px solid #fff; border-top-right-radius: 4px; border-left: 1px solid #fff; }
.tab.current { padding: 0 11px 0 10px; border-right-width: 3px; }
.tab:disabled, .check { color: #808080; }
.scroll { margin-left: auto; display: flex; align-self: flex-end; }
.scroll button { width: 14px; height: 18px; display: grid; place-items: center; border: solid; border-width: 1px 2px 2px 1px; border-color: #fff #888 #888 #fff; }
.scroll svg { width: 8px; height: 10px; }
.panel { margin: 4px 6px 0 7px; padding: 10px 73px 13px 12px; border: solid; border-width: 0 3px 3px 2px; border-color: #fff #999 #999 #fff; display: grid; grid-template-columns: 335fr 281fr; gap: 21px 13px; }
.wide { grid-column: 1 / -1; height: 77px; }
fieldset { margin: 0; min-width: 0; padding: 0; border: 2px groove #f4f4f4; }
legend { margin-left: 7px; padding: 0 5px 0 0; line-height: 20px; }
.wide .field { display: block; width: calc(100% - 40px); margin: 11px 20px; height: 30px; }
.block { height: 298px; }
.stack { padding: 16px 18px 0; display: flex; flex-direction: column; gap: 20px; }
.combo-set { height: 85px; padding: 15px 16px 0 17px; }
.combo, .pick { display: flex; align-items: flex-start; }
.combo .field { flex: 1; }
.color-set { height: 81px; padding: 12px 16px 0 17px; }
.combo-set legend, .color-set legend { margin-left: -11px; }
.pick { gap: 9px; align-items: center; }
.pick .field { flex: 1; height: 29px; }
.push { width: 76px; height: 32px; border: solid; border-width: 1px 2px 2px 1px; border-color: #fff #888 #888 #fff; }
.check { display: flex; align-items: center; gap: 8px; margin: 5px 0 0 7px; white-space: nowrap; }
.check input { appearance: none; width: 18px; height: 18px; border: solid; border-width: 3px 1px 1px 3px; border-color: #888 #ddd #ddd #888; background: #e4e4e4; }
.dialog footer { display: flex; justify-content: flex-end; gap: 11px; padding: 15px 16px 18px; }

.marks { position: absolute; inset: 0; width: 100%; height: 100%; pointer-events: none; }
```
FILE: wave.js
```js
const svg = document.getElementById('traces');
const END = 4000;
const ROW = 25.5;
const TOP = 7;
const SWING = 18;
const GRID0 = 80.3;
const DIV = 76.3;
const CLK = DIV / 5;
const START = 6;

const high = row => Math.floor(TOP + row * ROW) + 0.5;
const low = row => high(row) + SWING;
const px = x => Math.round(x) + 0.5;

function add(tag, attrs, text) {
  const el = document.createElementNS('http://www.w3.org/2000/svg', tag);
  for (const k in attrs) el.setAttribute(k, attrs[k]);
  if (text) el.textContent = text;
  svg.appendChild(el);
}
const trace = (d, cls = '') => add('path', { d, class: 'sig ' + cls });

for (let x = GRID0; x < END; x += DIV) add('path', { d: `M${Math.round(x)} 0V3000`, class: 'grid' });

function clock(row, firstRise, period) {
  let d = `M${START} ${low(row)}`;
  for (let x = firstRise; x < END; x += period) {
    d += `H${px(x)}V${high(row)}H${px(x + period / 2)}V${low(row)}`;
  }
  trace(d);
}
clock(0, GRID0 - 4.5 * CLK, CLK);
clock(1, GRID0 - 4 * CLK, CLK * 2);

const cursorX = 156;
trace(`M${START} ${low(2)}H${cursorX}V${high(2)}H${END}`, 'rst');
trace(`M${START} ${low(3)}H933.5V${high(3)}H${END}`);

const dinStart = 933.8;
const y1 = high(4);
const y2 = low(4);
let bus = `M5 ${y1}H${dinStart - 2}M5 ${y2}H${dinStart - 2}`;
for (let x = dinStart; x < END; x += CLK * 2) {
  const next = x + CLK * 2;
  bus += `M${x - 2} ${y1}L${x} ${y1 + 5}V${y2 - 5}L${x - 2} ${y2}`;
  bus += `M${x} ${y1 + 5}L${x + 2} ${y1}H${next - 2}M${x} ${y2 - 5}L${x + 2} ${y2}H${next - 2}`;
}
trace(bus, 'vec');

for (const row of [5, 7, 8, 10]) trace(`M${START} ${low(row)}H${END}`);
trace(`M${START} ${high(9)}H1003.500V${low(9)}H${END}`);
for (const row of [6, 11, 12]) trace(`M5 ${high(row)}H${END}M5 ${low(row)}H${END}`, 'vec');

add('rect', { x: cursorX - 1, y: 2, width: 4, height: 3000, class: 'cursor' });
add('rect', { x: cursorX, y: 2, width: 1, height: 3000, class: 'cursor-core' });

const labels = [[4, 11, '00'], [6, 11, '00'], [11, 11, '80000003'], [12, 11, '80000004'], [4, 1368, 'f9']];
for (const [row, x, text] of labels) add('text', { x, y: high(row) + 15, class: 'val' }, text);
```
